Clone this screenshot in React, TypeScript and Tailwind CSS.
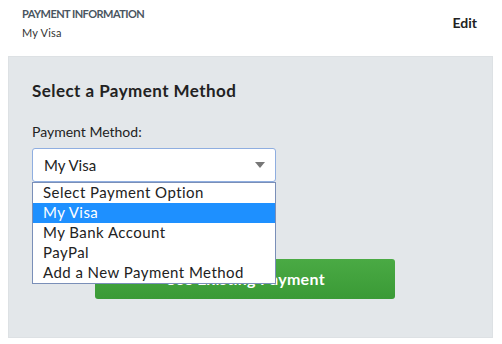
import { useState } from "react";

const options = [
  "Select Payment Option",
  "My Visa",
  "My Bank Account",
  "PayPal",
  "Add a New Payment Method",
];

export default function App() {
  const [selected] = useState("My Visa");

  return (
    <div className="w-[502px] h-[344px] bg-white font-['Lato',sans-serif] text-[#222] overflow-hidden">
      {/* Summary header */}
      <div className="flex items-start justify-between pl-[22px] pr-[25px] pt-[7px] h-[56px]">
        <div>
          <div className="text-[11px] font-bold text-[#4a5560] tracking-[-0.55px] leading-[14px]">
            PAYMENT INFORMATION
          </div>
          <div className="text-[11px] text-[#333] mt-[5px] leading-[14px] tracking-[0.2px]">{selected}</div>
        </div>
        <div className="text-[14px] font-bold text-[#222] mt-[5px]">Edit</div>
      </div>

      {/* Payment panel */}
      <div className="ml-[8px] w-[485px] h-[282px] bg-[#e3e7ea] border border-[#dde1e4] pl-[23px] pt-[23px]">
        <h2 className="text-[17px] font-bold text-[#222] leading-[22px] tracking-[0.45px]">
          Select a Payment Method
        </h2>
        <div className="mt-[22px] text-[14px] text-[#222] leading-[16px]">Payment Method:</div>

        <div className="relative mt-[8px] w-[244px]">
          <div className="h-[34px] bg-white border border-[#8faee0] rounded-[3px] flex items-center justify-between pl-[11px] pr-[10px]">
            <span className="text-[15px] text-[#222]">{selected}</span>
            <svg width="10" height="6" viewBox="0 0 10 6" className="text-[#777]">
              <path d="M0 0h10L5 6z" fill="currentColor" />
            </svg>
          </div>

          {/* Open option list */}
          <ul className="absolute left-0 top-[34px] w-[244px] bg-white border border-[#7a8fb8] z-10">
            {options.map((o) => (
              <li
                key={o}
                className={`h-[20px] leading-[19px] pl-[10px] text-[15px] tracking-[0.45px] ${
                  o === selected ? "bg-[#1e90ff] text-white" : "text-[#222]"
                }`}
              >
                {o}
              </li>
            ))}
          </ul>
        </div>

        <button className="mt-[77px] ml-[63px] w-[300px] h-[40px] rounded-[3px] bg-gradient-to-b from-[#4aaa44] to-[#3a9a36] text-white text-[16px] font-bold tracking-[0.3px]">
          Use Existing Payment
        </button>
      </div>
    </div>
  );
}
